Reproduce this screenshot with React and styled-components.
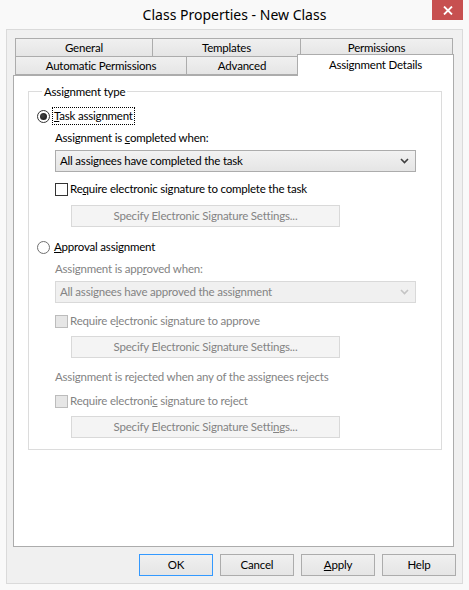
import React, { useState } from 'react';
import styled, { createGlobalStyle } from 'styled-components';

const GlobalStyle = createGlobalStyle`
  html, body {
    margin: 0;
    padding: 0;
    background: #f9f9f9;
  }
  body, * {
    font-family: Lato, 'Noto Sans', Arial, sans-serif;
    box-sizing: border-box;
  }
`;

const Window = styled.div`
  width: 469px;
  height: 590px;
  display: flex;
  flex-direction: column;
  background: #f9f9f9;
`;

const TitleBar = styled.div`
  height: 29px;
  display: flex;
  align-items: flex-start;
  justify-content: center;
  position: relative;
`;

const Title = styled.div`
  font-family: 'Noto Sans', Arial, sans-serif;
  font-size: 14px;
  color: #000;
  line-height: 29px;
`;

const CloseBtn = styled.div`
  position: absolute;
  top: 0;
  right: 6px;
  width: 31px;
  height: 20px;
  background: #c75050;
  display: flex;
  align-items: center;
  justify-content: center;
`;

const Frame = styled.div`
  margin: 0 6px;
  height: 555px;
  border: 1px solid #dadada;
  background: #f0f0f0;
  display: flex;
  flex-direction: column;
  padding: 9px 8px 7px 6px;
`;

const TabRow = styled.div`
  display: flex;
  padding-left: 2px;
  align-items: flex-end;
  height: ${p => p.h}px;
`;

const Tab = styled.div`
  width: ${p => p.w}px;
  height: ${p => (p.active ? 22 : 19)}px;
  margin-left: ${p => (p.first ? 0 : -1)}px;
  margin-bottom: ${p => (p.active ? -1 : 0)}px;
  border: 1px solid #acacac;
  border-bottom: ${p => (p.active ? 'none' : '1px solid #acacac')};
  background: ${p => (p.active ? '#fff' : 'linear-gradient(#f0f0f0, #e5e5e5)')};
  font-size: 11.5px;
  letter-spacing: -0.2px;
  color: #000;
  display: flex;
  justify-content: center;
  align-items: flex-start;
  padding-top: ${p => (p.active ? 2 : 1)}px;
  line-height: 16px;
  position: relative;
  z-index: ${p => (p.active ? 2 : 1)};
  cursor: default;
`;

const Panel = styled.div`
  flex: 1;
  background: #fff;
  border: 1px solid #acacac;
  padding: 8px 11px 0 14px;
  position: relative;
  z-index: 1;
`;

const GroupBox = styled.fieldset`
  margin: 0;
  border: 1px solid #dcdcdc;
  padding: 9px 8px 11px 8px;
  display: flex;
  flex-direction: column;
  min-width: 0;
`;

const Legend = styled.legend`
  font-size: 11.5px;
  letter-spacing: -0.2px;
  line-height: 15px;
  color: #000;
  padding: 0 2px;
  margin-left: 5px;
`;

const Row = styled.div`
  display: flex;
  align-items: center;
  height: 16px;
  margin-top: ${p => p.mt || 0}px;
  padding-left: ${p => p.indent || 0}px;
`;

const Text = styled.span`
  font-size: 11.5px;
  letter-spacing: -0.2px;
  line-height: 16px;
  color: ${p => (p.disabled ? '#838383' : '#000')};
  white-space: nowrap;
`;

const FocusText = styled(Text)`
  outline: 1px dotted #000;
  outline-offset: 0;
  padding: 0 1px;
  margin-left: 3px;
`;

const RadioCircle = styled.span`
  width: 13px;
  height: 13px;
  border-radius: 50%;
  border: 1px solid ${p => (p.checked ? '#333' : '#707070')};
  background: #fff;
  display: flex;
  align-items: center;
  justify-content: center;
  flex-shrink: 0;
`;

const RadioDot = styled.span`
  width: 7px;
  height: 7px;
  border-radius: 50%;
  background: radial-gradient(circle at 40% 40%, #444, #111);
`;

const CheckBox = styled.span`
  width: 13px;
  height: 13px;
  border: 1px solid ${p => (p.disabled ? '#bcbcbc' : '#333')};
  background: ${p => (p.disabled ? '#e6e6e6' : '#fff')};
  flex-shrink: 0;
  margin-right: 2px;
`;

const SelectBox = styled.div`
  height: 22px;
  width: 361px;
  margin-left: 18px;
  margin-top: ${p => p.mt || 0}px;
  border: 1px solid ${p => (p.disabled ? '#d9d9d9' : '#acacac')};
  background: ${p => (p.disabled ? '#f0f0f0' : 'linear-gradient(#f2f2f2, #e5e5e5)')};
  display: flex;
  align-items: center;
  justify-content: space-between;
  padding: 0 6px 0 4px;
`;

const SigButton = styled.div`
  height: 22px;
  width: 269px;
  margin-left: 34px;
  margin-top: ${p => p.mt || 0}px;
  border: 1px solid #d9d9d9;
  background: #f4f4f4;
  display: flex;
  align-items: center;
  justify-content: center;
`;

const ButtonBar = styled.div`
  display: flex;
  justify-content: flex-end;
  gap: 7px;
  margin-top: 7px;
  margin-right: -2px;
`;

const DlgButton = styled.button`
  width: 74px;
  height: 22px;
  border: 1px solid ${p => (p.isDefault ? '#3399ff' : '#acacac')};
  background: linear-gradient(#f0f0f0, #e5e5e5);
  font-size: 11.5px;
  letter-spacing: -0.2px;
  color: #000;
  padding: 0;
  line-height: 16px;
`;

const U = styled.span`
  text-decoration: underline;
`;

function Chevron({ color }) {
  return (
    <svg width="9" height="6" viewBox="0 0 9 6">
      <path d="M1 1 L4.5 4.5 L8 1" fill="none" stroke={color} strokeWidth="1.6" />
    </svg>
  );
}

function Radio({ checked }) {
  return <RadioCircle checked={checked}>{checked && <RadioDot />}</RadioCircle>;
}

export default function App() {
  const [mode] = useState('task');

  return (
    <Window>
      <GlobalStyle />
      <TitleBar>
        <Title>Class Properties - New Class</Title>
        <CloseBtn>
          <svg width="10" height="9" viewBox="0 0 10 9">
            <path d="M1 0.5 L9 8.5 M9 0.5 L1 8.5" stroke="#fff" strokeWidth="1.8" />
          </svg>
        </CloseBtn>
      </TitleBar>
      <Frame>
        <TabRow h={18}>
          <Tab first w={138}>General</Tab>
          <Tab w={149}>Templates</Tab>
          <Tab w={153}>Permissions</Tab>
        </TabRow>
        <TabRow h={18}>
          <Tab first w={172}>Automatic Permissions</Tab>
          <Tab w={112}>Advanced</Tab>
          <Tab active w={157}>Assignment Details</Tab>
        </TabRow>
        <Panel>
          <GroupBox>
            <Legend>Assignment type</Legend>

            <Row>
              <Radio checked={mode === 'task'} />
              <FocusText><U>T</U>ask assignment</FocusText>
            </Row>
            <Row mt={6} indent={18}>
              <Text>Assignment is <U>c</U>ompleted when:</Text>
            </Row>
            <SelectBox mt={4}>
              <Text>All assignees have completed the task</Text>
              <Chevron color="#404040" />
            </SelectBox>
            <Row mt={9} indent={18}>
              <CheckBox />
              <Text>Re<U>q</U>uire electronic signature to complete the task</Text>
            </Row>
            <SigButton mt={8}>
              <Text disabled>Specify Electronic Signature Settings...</Text>
            </SigButton>

            <Row mt={12}>
              <Radio checked={mode === 'approval'} />
              <Text style={{ marginLeft: 4 }}><U>A</U>pproval assignment</Text>
            </Row>
            <Row mt={6} indent={18}>
              <Text disabled>Assignment is app<U>r</U>oved when:</Text>
            </Row>
            <SelectBox disabled mt={4}>
              <Text disabled>All assignees have approved the assignment</Text>
              <Chevron color="#c4c4c4" />
            </SelectBox>
            <Row mt={10} indent={18}>
              <CheckBox disabled />
              <Text disabled>Require e<U>l</U>ectronic signature to approve</Text>
            </Row>
            <SigButton mt={7}>
              <Text disabled>Specify Electronic Signature Settings...</Text>
            </SigButton>

            <Row mt={11} indent={18}>
              <Text disabled>Assignment is rejected when any of the assignees rejects</Text>
            </Row>
            <Row mt={8} indent={18}>
              <CheckBox disabled />
              <Text disabled>Require electroni<U>c</U> signature to reject</Text>
            </Row>
            <SigButton mt={7}>
              <Text disabled>Specify Electronic Signature Setti<U>n</U>gs...</Text>
            </SigButton>
          </GroupBox>
        </Panel>
        <ButtonBar>
          <DlgButton isDefault>OK</DlgButton>
          <DlgButton>Cancel</DlgButton>
          <DlgButton><U>A</U>pply</DlgButton>
          <DlgButton>Help</DlgButton>
        </ButtonBar>
      </Frame>
    </Window>
  );
}
